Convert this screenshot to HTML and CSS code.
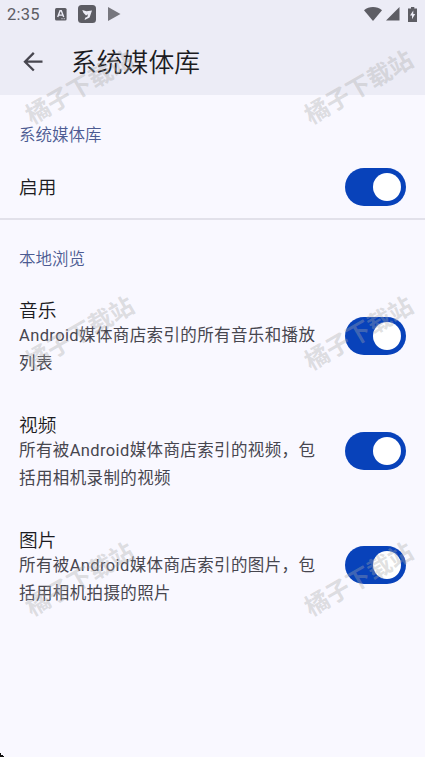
FILE: index.html
```html
<!DOCTYPE html>
<html lang="zh-CN">
<head>
<meta charset="utf-8">
<title>系统媒体库</title>
<link rel="stylesheet" href="styles.css">
</head>
<body>
<div class="screen">
  <header class="top">
    <div class="status">
      <span class="clock">2:35</span>
      <svg class="ic-a" width="12" height="13" viewBox="0 0 12 13"><rect width="11.6" height="12.6" rx="1.5" fill="#5d5d64"/><path d="M2.7 9 5.1 2.8h1.2L8.7 9M3.8 7.1h3.8" fill="none" stroke="#ececf6" stroke-width="1.4"/><path d="M6.5 10.7h1M8.7 10.7h1" stroke="#ececf6"/></svg>
      <svg class="ic-b" width="18" height="18" viewBox="0 0 18 18"><rect width="18" height="18" rx="3.5" fill="#5d5d64"/><path d="M4.3 5 8.5 6.2 14 5.4l-2.4 7-5 2.6.6-2.2 2.2-1 .6-2.6-2 1.2-2.6-2.6z" fill="#ececf6"/></svg>
      <svg class="ic-c" width="13" height="14" viewBox="0 0 13 14"><path d="M0 0v14l12.5-7z" fill="#77777e"/></svg>
      <span class="space"></span>
      <svg class="wifi" width="18" height="14" viewBox="0 0 18 14"><path d="M0 3.2C5-1 13-1 18 3.2L9 14z" fill="#5d5d64"/></svg>
      <svg class="cell" width="14" height="14" viewBox="0 0 14 14"><path d="M13.5 0v13.5H0z" fill="#5d5d64"/></svg>
      <svg class="battery" width="9" height="15" viewBox="0 0 9 15"><path d="M3 0h3.3v1.5H9V15H0V1.5h3z" fill="#5d5d64"/><path d="M5.3 3.5 2 8.6h2v3.7L7.2 7H5.3z" fill="#ececf6"/></svg>
    </div>
    <div class="appbar">
      <svg width="20" height="20" viewBox="0 0 20 20"><path d="M19.5 9.7H2.5M10.8.9 2 9.7l8.8 8.8" fill="none" stroke="#47464f" stroke-width="2.3"/></svg>
      <h1>系统媒体库</h1>
    </div>
  </header>
  <main>
    <section class="group first">
      <h2>系统媒体库</h2>
      <div class="row single"><div class="copy"><h3>启用</h3></div><span class="switch"></span></div>
    </section>
    <section class="group">
      <h2>本地浏览</h2>
      <div class="row"><div class="copy"><h3>音乐</h3><p>Android媒体商店索引的所有音乐和播放列表</p></div><span class="switch"></span></div>
      <div class="row"><div class="copy"><h3>视频</h3><p>所有被Android媒体商店索引的视频，包括用相机录制的视频</p></div><span class="switch"></span></div>
      <div class="row"><div class="copy"><h3>图片</h3><p>所有被Android媒体商店索引的图片，包括用相机拍摄的照片</p></div><span class="switch"></span></div>
    </section>
  </main>
  <div class="marks">
    <span>橘子下载站</span><span>橘子下载站</span>
    <span>橘子下载站</span><span>橘子下载站</span>
    <span>橘子下载站</span><span>橘子下载站</span>
  </div>
  <svg class="corner" width="4" height="5" viewBox="0 0 4 5"><path d="M0 1h1v2h2v1h1v1H0z" fill="#111"/></svg>
</div>
</body>
</html>
```
FILE: styles.css
```css
* { box-sizing: border-box; margin: 0; padding: 0; }
body { font-family: Roboto, "Noto Sans CJK SC", sans-serif; }
svg { display: block; flex: none; }
.screen { position: relative; width: 425px; height: 757px; overflow: hidden; background: #f9f8ff; color: #1b1b21; }
.top { height: 95px; background: #ececf6; }
.status { display: flex; align-items: center; height: 28px; margin-bottom: 1px; padding: 0 8px 0 7px; }
.clock { width: 48px; font-size: 16.5px; line-height: 29px; letter-spacing: .2px; color: #5d5d64; }
.ic-b { margin-left: 10.5px; }
.ic-c { margin-left: 12px; }
.space { flex: 1; }
.cell { margin-left: 4px; }
.battery { margin-left: 8px; }
.appbar { display: flex; align-items: center; height: 66px; padding-left: 23px; }
h1 { margin: 2px 0 0 28px; font-size: 25.8px; line-height: 38px; font-weight: 350; }
.group { padding: 28px 19px 0; }
.first { height: 125px; padding-top: 29px; border-bottom: 2px solid #e2e1ea; }
h2 { font-size: 16.5px; line-height: 24px; font-weight: 350; color: #4c5b92; }
.row { display: flex; align-items: center; justify-content: space-between; height: 114.7px; }
.single { height: 38px; margin-top: 19.6px; }
.single .copy { padding-top: 3px; }
.copy { width: 303px; }
h3 { font-size: 18.7px; line-height: 24px; font-weight: 350; }
p { font-size: 16.5px; line-height: 28.3px; font-weight: 400; letter-spacing: .38px; color: #47464f; }
.row:not(.single) h3 { margin-top: 6px; }
.row p { margin-top: -1px; }
.switch { flex: none; width: 61px; height: 38px; padding: 5px; border-radius: 19px; background: #0842ba; }
.switch::after { content: ""; display: block; width: 28px; height: 28px; margin-left: 23px; border-radius: 50%; background: #fff; }
.group:last-child h2 { margin-bottom: 6.6px; }
.marks { position: absolute; left: 14px; top: 68px; display: grid; grid-template-columns: 130px 130px; column-gap: 149px; row-gap: 210px; color: rgba(170, 170, 170, .37); pointer-events: none; }
.marks span { height: 36px; line-height: 36px; text-align: center; font-family: "Noto Sans CJK SC", sans-serif; font-weight: 700; font-size: 24px; transform: rotate(-30deg); }
.corner { position: absolute; left: 0; bottom: 0; }
```
